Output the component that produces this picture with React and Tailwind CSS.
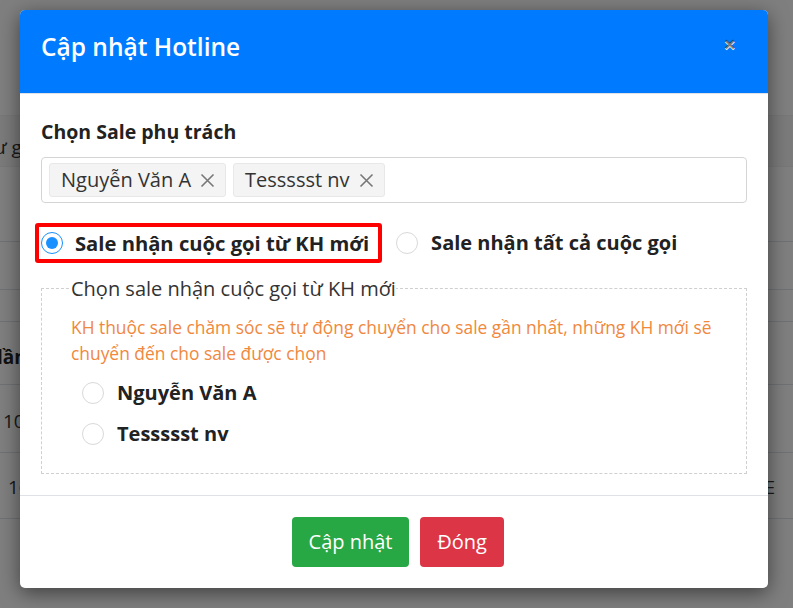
import React from 'react';

function Radio({ checked }) {
  return (
    <span
      className={`flex h-[22px] w-[22px] shrink-0 items-center justify-center rounded-full border bg-white ${
        checked ? 'border-[#1890ff]' : 'border-[#d9d9d9]'
      }`}
    >
      {checked && <span className="h-[12px] w-[12px] rounded-full bg-[#1890ff]" />}
    </span>
  );
}

function Tag({ label }) {
  return (
    <span className="flex h-[34px] items-center gap-[9px] rounded-[3px] border border-[#e8e8e8] bg-[#f4f4f4] pl-[11px] pr-[10px] text-[20px] text-[#333]">
      {label}
      <svg width="15" height="15" viewBox="0 0 15 15" className="text-[#777]">
        <path d="M1.5 1.5 L13.5 13.5 M13.5 1.5 L1.5 13.5" stroke="currentColor" strokeWidth="1.6" />
      </svg>
    </span>
  );
}

export default function App() {
  return (
    <div className="relative h-[608px] w-[793px] overflow-hidden bg-white font-['Open_Sans','Noto_Sans',sans-serif] text-[#333]">
      {/* Page behind the modal */}
      <div className="flex flex-col pt-[115px] text-[19px]">
        <div className="flex h-[52px] items-center border-y border-[#f0f0f0] bg-[#f7f7f7] pt-[12px]">
          <span className="-ml-[6px]">ư gọi</span>
        </div>
        <div className="h-[75px] border-b border-[#dee2e6]" />
        <div className="h-[48px] border-b border-[#dee2e6]" />
        <div className="h-[32px] border-b border-[#dee2e6]" />
        <div className="flex h-[63px] items-center border-b border-[#dee2e6] pt-[8px] font-bold text-[#222]">
          <span className="-ml-[3px]">lần</span>
        </div>
        <div className="flex h-[68px] items-center border-b border-[#dee2e6] pt-[6px]">
          <span className="ml-[3px]">10</span>
        </div>
        <div className="flex h-[66px] items-center justify-between border-b border-[#dee2e6] pt-[4px]">
          <span className="ml-[8px]">16</span>
          <span className="mr-[18px]">E</span>
        </div>
      </div>

      {/* Backdrop */}
      <div className="absolute inset-0 bg-black/50" />

      {/* Modal */}
      <div className="absolute left-[20px] top-[10px] w-[748px] overflow-hidden rounded-[5px] bg-white shadow-[0_5px_20px_rgba(0,0,0,0.5)]">
        <div className="flex h-[84px] justify-between border-b border-[#dee2e6] bg-[#007bff] pl-[21px] pr-[32px]">
          <h5 className="self-center pb-[8px] text-[24.5px] font-semibold text-white">Cập nhật Hotline</h5>
          <button className="mt-[22px] self-start text-[22px] font-bold leading-none text-black/50 [text-shadow:0_1px_0_#fff]">×</button>
        </div>

        <div className="px-[21px] pb-[21px] pt-[24px]">
          <div className="h-[28px] text-[19.5px] font-bold leading-[28px] text-[#222]">Chọn Sale phụ trách</div>

          <div className="mt-[11px] flex h-[46px] items-center gap-[7px] rounded-[4px] border border-[#d4d4d4] px-[7px]">
            <Tag label="Nguyễn Văn A" />
            <Tag label="Tessssst nv" />
          </div>

          <div className="mt-[20px] flex items-center">
            <div className="-ml-[6px] flex h-[40px] items-center gap-[12px] rounded-[3px] border-[4px] border-[#ff0000] pl-[2px] pr-[9px]">
              <Radio checked />
              <span className="text-[20.2px] font-bold text-[#222]">Sale nhận cuộc gọi từ KH mới</span>
            </div>
            <div className="ml-[14px] flex items-center gap-[13px]">
              <Radio />
              <span className="text-[20px] font-bold text-[#222]">Sale nhận tất cả cuộc gọi</span>
            </div>
          </div>

          <fieldset className="mt-[12px] border border-dashed border-[#cfcfcf] px-[29px] pb-[24px]">
            <legend className="text-[20px] leading-[27px] text-[#333]">Chọn sale nhận cuộc gọi từ KH mới</legend>
            <p className="mt-[12px] text-[17.4px] leading-[26px] text-[#f0883e]">
              KH thuộc sale chăm sóc sẽ tự động chuyển cho sale gần nhất, những KH mới sẽ chuyển đến cho sale được chọn
            </p>
            <div className="ml-[11px] mt-[11px] flex flex-col gap-[10px]">
              <div className="flex h-[31px] items-center gap-[13px]">
                <Radio />
                <span className="text-[20px] font-bold text-[#222]">Nguyễn Văn A</span>
              </div>
              <div className="flex h-[31px] items-center gap-[13px]">
                <Radio />
                <span className="text-[20px] font-bold text-[#222]">Tessssst nv</span>
              </div>
            </div>
          </fieldset>
        </div>

        <div className="flex justify-center gap-[11px] border-t border-[#dee2e6] py-[21px] pl-[8px]">
          <button className="h-[50px] w-[117px] rounded-[4px] bg-[#28a745] text-[20px] text-white">Cập nhật</button>
          <button className="h-[50px] w-[84px] rounded-[4px] bg-[#dc3545] text-[20px] text-white">Đóng</button>
        </div>
      </div>
    </div>
  );
}
